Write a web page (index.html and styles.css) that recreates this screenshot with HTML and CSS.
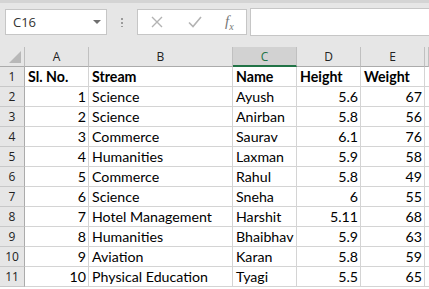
FILE: index.html
```html
<!DOCTYPE html>
<html lang="en">
<head>
    <meta charset="UTF-8">
    <title>Book1 - Excel</title>
    <link rel="stylesheet" href="styles.css">
</head>
<body>
    <div class="formula-bar">
        <div class="name-box">
            <span>C16</span>
            <span class="caret"></span>
        </div>
        <div class="grip"></div>
        <div class="fx-box">
            <svg class="icon" width="14" height="14" viewBox="0 0 14 14">
                <path d="M2 2 L12 12 M12 2 L2 12" stroke="#b3b3b3" stroke-width="1.4" fill="none"/>
            </svg>
            <svg class="icon" width="16" height="14" viewBox="0 0 16 14">
                <path d="M2 7.5 L6 11.5 L14 2" stroke="#b3b3b3" stroke-width="1.6" fill="none"/>
            </svg>
            <span class="fx">f<sub>x</sub></span>
        </div>
        <div class="formula-input"></div>
    </div>

    <div class="grid">
        <div class="corner"><span class="tri"></span></div>
        <div class="col-head">A</div>
        <div class="col-head">B</div>
        <div class="col-head active">C</div>
        <div class="col-head">D</div>
        <div class="col-head">E</div>
        <div class="col-head"></div>

        <div class="row-head">1</div>
        <div class="cell bold">Sl. No.</div>
        <div class="cell bold">Stream</div>
        <div class="cell bold">Name</div>
        <div class="cell bold">Height</div>
        <div class="cell bold">Weight</div>
        <div class="cell"></div>

        <div class="row-head">2</div>
        <div class="cell num">1</div>
        <div class="cell">Science</div>
        <div class="cell">Ayush</div>
        <div class="cell num">5.6</div>
        <div class="cell num">67</div>
        <div class="cell"></div>

        <div class="row-head">3</div>
        <div class="cell num">2</div>
        <div class="cell">Science</div>
        <div class="cell">Anirban</div>
        <div class="cell num">5.8</div>
        <div class="cell num">56</div>
        <div class="cell"></div>

        <div class="row-head">4</div>
        <div class="cell num">3</div>
        <div class="cell">Commerce</div>
        <div class="cell">Saurav</div>
        <div class="cell num">6.1</div>
        <div class="cell num">76</div>
        <div class="cell"></div>

        <div class="row-head">5</div>
        <div class="cell num">4</div>
        <div class="cell">Humanities</div>
        <div class="cell">Laxman</div>
        <div class="cell num">5.9</div>
        <div class="cell num">58</div>
        <div class="cell"></div>

        <div class="row-head">6</div>
        <div class="cell num">5</div>
        <div class="cell">Commerce</div>
        <div class="cell">Rahul</div>
        <div class="cell num">5.8</div>
        <div class="cell num">49</div>
        <div class="cell"></div>

        <div class="row-head">7</div>
        <div class="cell num">6</div>
        <div class="cell">Science</div>
        <div class="cell">Sneha</div>
        <div class="cell num">6</div>
        <div class="cell num">55</div>
        <div class="cell"></div>

        <div class="row-head">8</div>
        <div class="cell num">7</div>
        <div class="cell">Hotel Management</div>
        <div class="cell">Harshit</div>
        <div class="cell num">5.11</div>
        <div class="cell num">68</div>
        <div class="cell"></div>

        <div class="row-head">9</div>
        <div class="cell num">8</div>
        <div class="cell">Humanities</div>
        <div class="cell">Bhaibhav</div>
        <div class="cell num">5.9</div>
        <div class="cell num">63</div>
        <div class="cell"></div>

        <div class="row-head">10</div>
        <div class="cell num">9</div>
        <div class="cell">Aviation</div>
        <div class="cell">Karan</div>
        <div class="cell num">5.8</div>
        <div class="cell num">59</div>
        <div class="cell"></div>

        <div class="row-head">11</div>
        <div class="cell num">10</div>
        <div class="cell">Physical Education</div>
        <div class="cell">Tyagi</div>
        <div class="cell num">5.5</div>
        <div class="cell num">65</div>
        <div class="cell"></div>
    </div>
</body>
</html>
```

FILE: styles.css
```css
body {
    margin: 0;
    width: 429px;
    height: 289px;
    overflow: hidden;
    background-color: white;
    font-family: Lato, "Liberation Sans", sans-serif;
}

/* formula bar */
.formula-bar {
    display: flex;
    align-items: center;
    height: 47px;
    box-sizing: border-box;
    padding: 0 0 0 5px;
    background-color: #e6e6e6;
    border-top: 3px solid #d4d4d4;
}
.name-box {
    display: flex;
    align-items: center;
    justify-content: space-between;
    width: 102px;
    height: 26px;
    box-sizing: border-box;
    padding: 0 5px 0 7px;
    margin-top: -6px;
    background-color: white;
    border: 1px solid #c6c6c6;
    font-family: "Open Sans", sans-serif;
    font-size: 13px;
    color: #333;
}
.caret {
    width: 0;
    height: 0;
    border-left: 4px solid transparent;
    border-right: 4px solid transparent;
    border-top: 4px solid #6f6f6f;
}
.grip {
    width: 2px;
    height: 10px;
    margin: -6px 14px 0 14px;
    background-image: radial-gradient(circle, #9a9a9a 1px, transparent 1px);
    background-size: 2px 4px;
}
.fx-box {
    display: flex;
    align-items: center;
    width: 110px;
    height: 26px;
    box-sizing: border-box;
    padding-left: 12px;
    margin-top: -6px;
    background-color: white;
    border: 1px solid #c6c6c6;
}
.icon {
    margin-right: 23px;
}
.fx {
    font-family: "Liberation Serif", serif;
    font-style: italic;
    font-size: 15px;
    color: #777;
    margin-left: -1px;
}
.fx sub {
    font-size: 10px;
}
.formula-input {
    flex: 1;
    height: 26px;
    margin: -6px 0 0 3px;
    background-color: white;
    border: 1px solid #c6c6c6;
    border-right: none;
}

/* sheet grid */
.grid {
    display: grid;
    width: 429px;
    grid-template-columns: 25px 64px 144px 64px 64px 64px minmax(0, 1fr);
    grid-auto-rows: 20px;
    overflow: hidden;
}
.corner,
.col-head,
.row-head {
    background-color: #e6e6e6;
    box-sizing: border-box;
    font-family: "Open Sans", sans-serif;
    font-size: 12px;
    color: #222;
}
.corner {
    position: relative;
    border-right: 1px solid #bdbdbd;
    border-bottom: 1px solid #ababab;
}
.tri {
    position: absolute;
    right: 3px;
    bottom: 3px;
    width: 0;
    height: 0;
    border-left: 12px solid transparent;
    border-bottom: 12px solid #b8b8b8;
}
.col-head {
    display: flex;
    align-items: center;
    justify-content: center;
    border-right: 1px solid #c0c0c0;
    border-bottom: 1px solid #ababab;
}
.col-head.active {
    background-color: #d2d2d2;
    color: #217346;
    border-bottom: 2px solid #217346;
}
.row-head {
    display: flex;
    align-items: center;
    justify-content: center;
    border-right: 1px solid #ababab;
    border-bottom: 1px solid #c8c8c8;
}
.cell {
    box-sizing: border-box;
    padding: 0 2px 0 3px;
    border-right: 1px solid #d4d4d4;
    border-bottom: 1px solid #d4d4d4;
    font-size: 14.2px;
    line-height: 20px;
    color: #000;
    white-space: nowrap;
    overflow: hidden;
}
.bold {
    font-weight: bold;
}
.num {
    text-align: right;
}
```
